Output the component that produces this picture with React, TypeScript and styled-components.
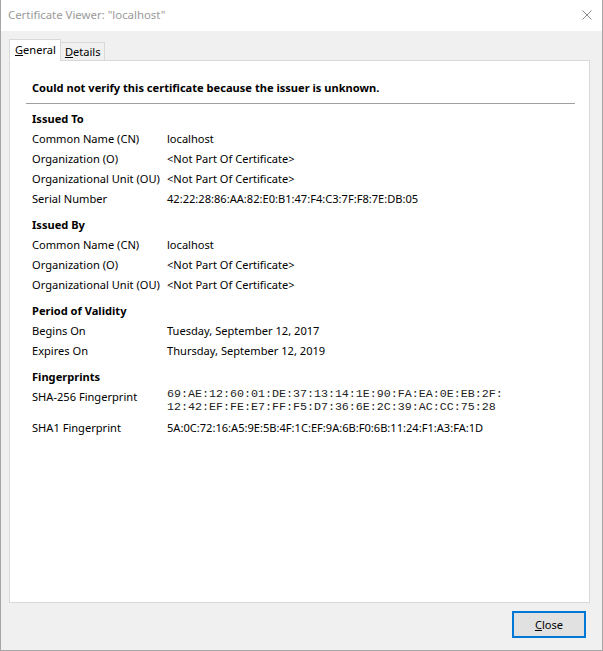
import React from "react";
import styled, { createGlobalStyle } from "styled-components";

const Global = createGlobalStyle`
  html, body { margin: 0; padding: 0; background: #ffffff; }
  * { box-sizing: border-box; }
`;

const FONT = `"Noto Sans", "Open Sans", sans-serif`;
const SIZE = "11.1px";

const Window = styled.div`
  width: 603px;
  height: 651px;
  display: flex;
  flex-direction: column;
  border-left: 1px solid #a6a6a6;
  border-right: 1px solid #a6a6a6;
  border-bottom: 1px solid #a6a6a6;
  font-family: ${FONT};
  font-size: ${SIZE};
  color: #000;
  background: #f0f0f0;
`;

const TitleBar = styled.div`
  height: 31px;
  flex: none;
  background: #ffffff;
  display: flex;
  align-items: center;
  justify-content: space-between;
  padding: 0 9px 2px 7px;
`;

const TitleText = styled.span`
  color: #9a9a9a;
  font-size: 11.4px;
`;

const CloseX = styled.svg`
  width: 10px;
  height: 10px;
  margin-right: 1px;
  margin-top: 1px;
`;

const Client = styled.div`
  flex: 1;
  display: flex;
  flex-direction: column;
  padding: 8px 12px 12px 8px;
`;

const TabRow = styled.div`
  display: flex;
  align-items: flex-end;
  height: 22px;
  position: relative;
  z-index: 1;
  margin-bottom: -1px;
`;

const Tab = styled.div<{ $active?: boolean }>`
  height: ${(p) => (p.$active ? "22px" : "19px")};
  padding: ${(p) => (p.$active ? "0 4px 2px 5px" : "0 3px 0 4px")};
  display: flex;
  align-items: center;
  background: ${(p) => (p.$active ? "#ffffff" : "#f0f0f0")};
  border: 1px solid #d9d9d9;
  border-bottom: ${(p) => (p.$active ? "1px solid #ffffff" : "1px solid #d9d9d9")};
  margin-left: ${(p) => (p.$active ? "0" : "-1px")};
`;

const Panel = styled.div`
  flex: 1;
  background: #ffffff;
  border: 1px solid #d9d9d9;
  padding: 17px 14px 0 16px;
`;

const Headline = styled.div`
  font-weight: bold;
  padding: 0 0 5px 6px;
  line-height: 20px;
  border-bottom: 1px solid #a0a0a0;
`;

const Section = styled.div<{ $first?: boolean }>`
  padding-left: 6px;
  margin-top: ${(p) => (p.$first ? "5px" : "6px")};
`;

const SectionTitle = styled.div`
  font-weight: bold;
  line-height: 20px;
`;

const Row = styled.div`
  display: grid;
  grid-template-columns: 135px 1fr;
  line-height: 20px;
  align-items: start;
  white-space: nowrap;
`;

const Mono = styled.div`
  font-family: "Liberation Mono", "Courier New", monospace;
  font-size: 11.67px;
  line-height: 13px;
  color: #222;
  padding: 1px 0 4px;
`;

const Footer = styled.div`
  display: flex;
  justify-content: flex-end;
  padding-top: 8px;
  padding-right: 4px;
`;

const Button = styled.button`
  width: 74px;
  height: 27px;
  background: #e1e1e1;
  border: 2px solid #0078d7;
  font-family: ${FONT};
  font-size: ${SIZE};
  color: #000;
  padding: 0;
  cursor: default;
`;

type Field = [string, string];

const issuedTo: Field[] = [
  ["Common Name (CN)", "localhost"],
  ["Organization (O)", "<Not Part Of Certificate>"],
  ["Organizational Unit (OU)", "<Not Part Of Certificate>"],
  ["Serial Number", "42:22:28:86:AA:82:E0:B1:47:F4:C3:7F:F8:7E:DB:05"],
];

const issuedBy: Field[] = [
  ["Common Name (CN)", "localhost"],
  ["Organization (O)", "<Not Part Of Certificate>"],
  ["Organizational Unit (OU)", "<Not Part Of Certificate>"],
];

const validity: Field[] = [
  ["Begins On", "Tuesday, September 12, 2017"],
  ["Expires On", "Thursday, September 12, 2019"],
];

const Rows = ({ items }: { items: Field[] }) => (
  <>
    {items.map(([k, v]) => (
      <Row key={k}>
        <span>{k}</span>
        <span>{v}</span>
      </Row>
    ))}
  </>
);

export default function App() {
  return (
    <>
      <Global />
      <Window>
        <TitleBar>
          <TitleText>Certificate Viewer: "localhost"</TitleText>
          <CloseX viewBox="0 0 10 10">
            <path d="M0.5 0.5 L9.5 9.5 M9.5 0.5 L0.5 9.5" stroke="#8a8a8a" strokeWidth="1" fill="none" />
          </CloseX>
        </TitleBar>
        <Client>
          <TabRow>
            <Tab $active>
              <span>
                <u>G</u>eneral
              </span>
            </Tab>
            <Tab>
              <span>
                <u>D</u>etails
              </span>
            </Tab>
          </TabRow>
          <Panel>
            <Headline>Could not verify this certificate because the issuer is unknown.</Headline>
            <Section $first>
              <SectionTitle>Issued To</SectionTitle>
              <Rows items={issuedTo} />
            </Section>
            <Section>
              <SectionTitle>Issued By</SectionTitle>
              <Rows items={issuedBy} />
            </Section>
            <Section>
              <SectionTitle>Period of Validity</SectionTitle>
              <Rows items={validity} />
            </Section>
            <Section>
              <SectionTitle>Fingerprints</SectionTitle>
              <Row>
                <span>SHA-256 Fingerprint</span>
                <Mono>
                  69:AE:12:60:01:DE:37:13:14:1E:90:FA:EA:0E:EB:2F:
                  <br />
                  12:42:EF:FE:E7:FF:F5:D7:36:6E:2C:39:AC:CC:75:28
                </Mono>
              </Row>
              <Row>
                <span>SHA1 Fingerprint</span>
                <span>5A:0C:72:16:A5:9E:5B:4F:1C:EF:9A:6B:F0:6B:11:24:F1:A3:FA:1D</span>
              </Row>
            </Section>
          </Panel>
          <Footer>
            <Button>
              <u>C</u>lose
            </Button>
          </Footer>
        </Client>
      </Window>
    </>
  );
}
